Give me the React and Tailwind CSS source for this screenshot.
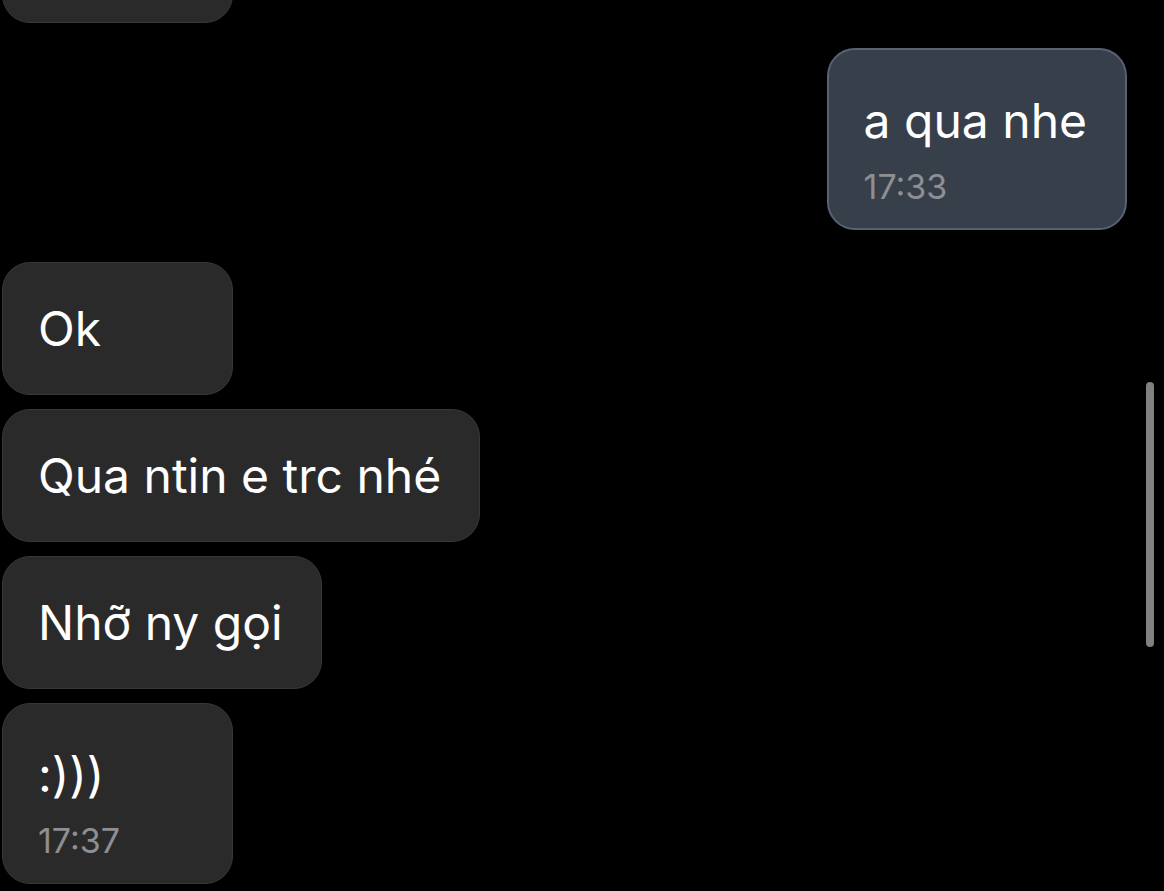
import React from "react";

const Bubble = ({ text, time, mine = false, className = "" }) => (
  <div
    className={`rounded-[28px] pl-[35px] pr-[38px] ${
      time ? (mine ? "pt-[40px] pb-[21px]" : "pt-[40px] pb-[22px]") : "py-[35px]"
    } ${
      mine
        ? "self-end mr-[37px] border-2 bg-[#373f4b] border-[#586272]"
        : "self-start ml-[2px] border bg-[#2a2a2a] border-[#383838]"
    } ${className}`}
  >
    <div className="text-[48px] leading-[61px] text-white whitespace-nowrap">{text}</div>
    {time && (
      <div className="mt-[16px] text-[34px] leading-[40px] text-[#8e8e93]">{time}</div>
    )}
  </div>
);

export default function App() {
  return (
    <div
      className="relative h-[891px] w-[1164px] overflow-hidden bg-black"
      style={{ fontFamily: "Inter, 'Noto Sans', sans-serif" }}
    >
      <div className="flex flex-col">
        {/* cut-off bubble at top */}
        <div className="ml-[2px] -mt-[110px] h-[133px] w-[231px] rounded-[28px] border border-[#383838] bg-[#2a2a2a]" />

        <Bubble text="a qua nhe" time="17:33" mine className="mt-[25px]" />

        <div className="mt-[32px] flex flex-col gap-[14px]">
          <Bubble text="Ok" className="min-w-[231px]" />
          <Bubble text="Qua ntin e trc nhé" />
          <Bubble text="Nhỡ ny gọi" />
          <Bubble text=":)))" time="17:37" className="min-w-[231px]" />
        </div>
      </div>

      {/* scrollbar */}
      <div className="absolute right-[10px] top-[382px] h-[265px] w-[8px] rounded-full bg-[#808080]" />
    </div>
  );
}
